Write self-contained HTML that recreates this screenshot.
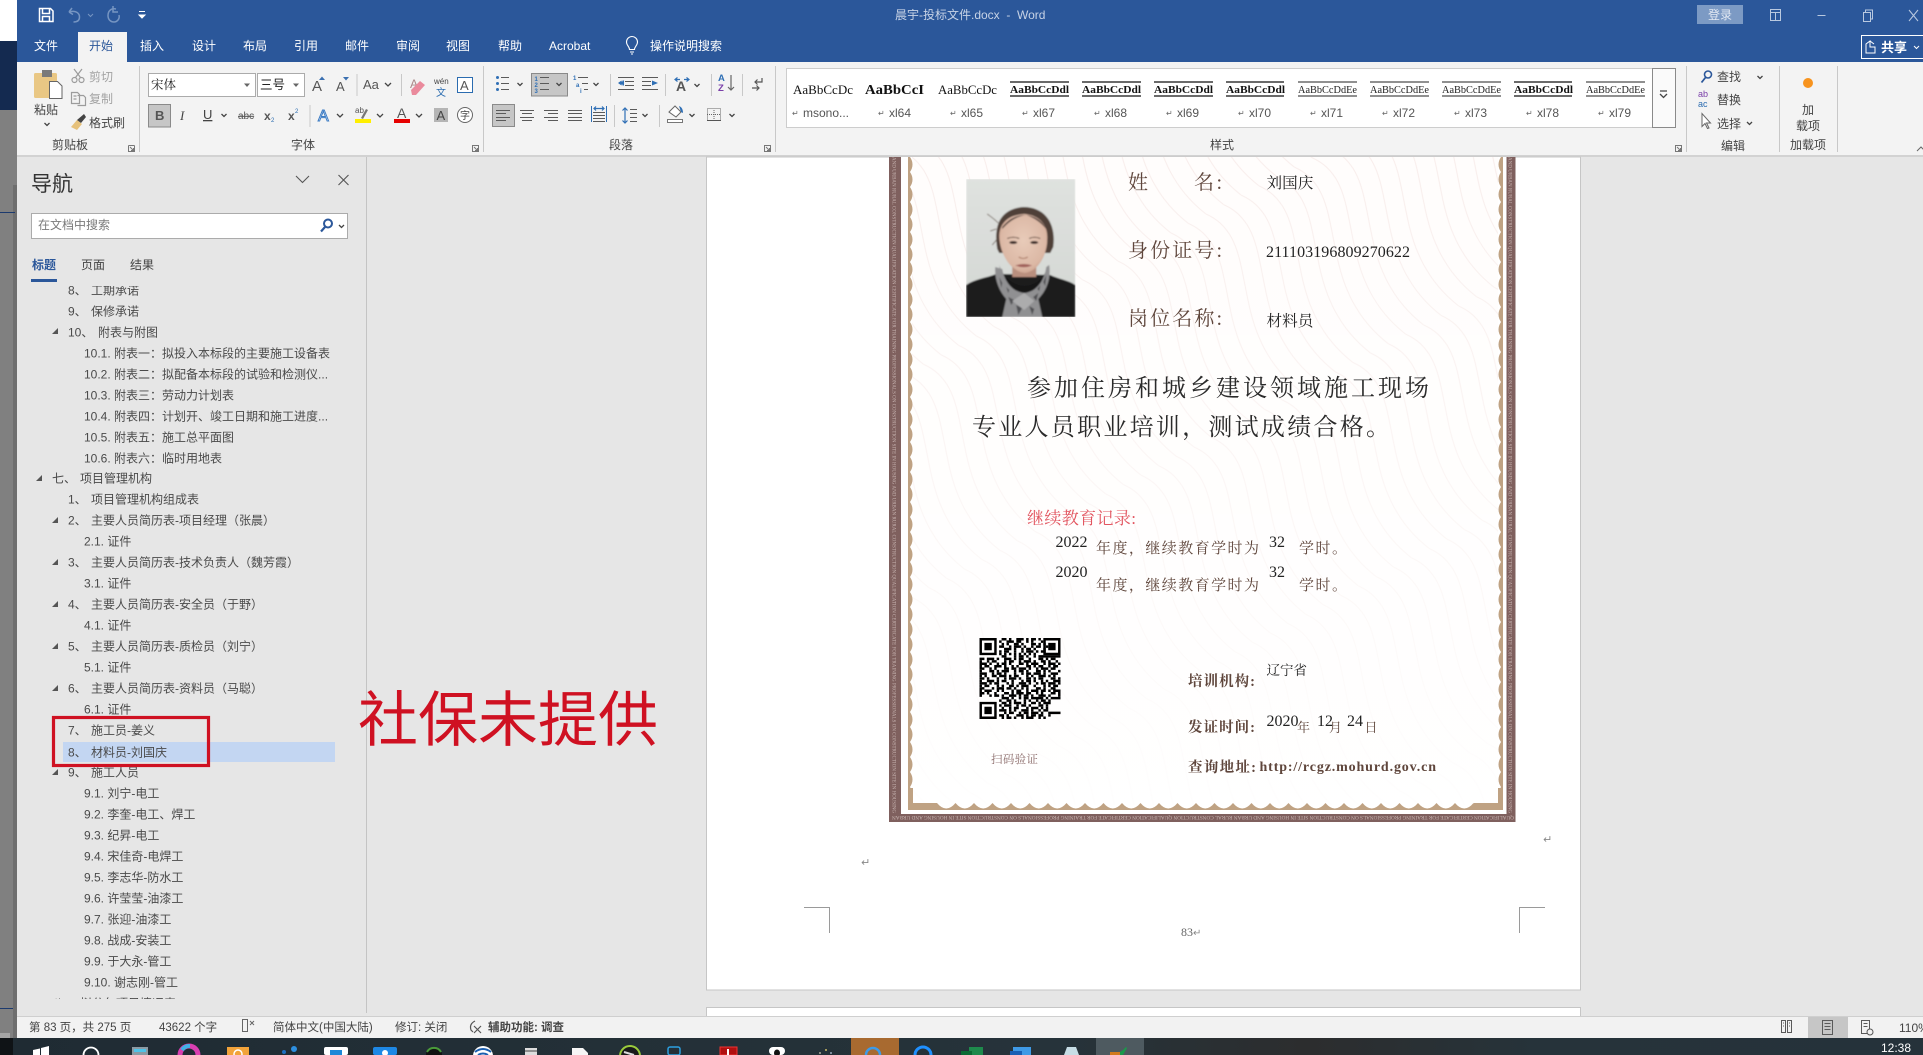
<!DOCTYPE html>
<html lang="zh-CN">
<head>
<meta charset="utf-8">
<title>晨宇-投标文件.docx - Word</title>
<style>
html,body{margin:0;padding:0;width:1923px;height:1055px;overflow:hidden;background:#e6e6e6}
svg{display:block}
text{font-family:"Liberation Sans","Noto Sans CJK SC",sans-serif;font-size:12px;fill:#444;white-space:pre}
.t text{fill:#fff}
.n text{fill:#4a4a4a}
.g text{fill:#444}
.s text{fill:#444;font-size:11.5px}
.serif,.serif text{font-family:"Liberation Serif","Noto Serif CJK SC",serif}
.lab text{fill:#5f463c;font-family:"Liberation Serif","Noto Serif CJK SC",serif}
.val text{fill:#222;font-family:"Liberation Serif","Noto Serif CJK SC",serif}
.ln{stroke:#5a5a5a;stroke-width:1;fill:none}
.bl{stroke:#2f6fb5;stroke-width:1.2;fill:none}
.ch{stroke:#444;stroke-width:1.3;fill:none}
.sep{stroke:#c8c8c8;stroke-width:1}
.micro{font-size:5.6px;fill:#c9b6b3;font-family:"Liberation Serif",serif}
</style>
</head>
<body>
<svg xmlns="http://www.w3.org/2000/svg" width="1923" height="1055" viewBox="0 0 1923 1055">
<defs>
<pattern id="wave" patternUnits="userSpaceOnUse" x="900" y="150" width="200" height="120" patternTransform="rotate(62 900 150)">
<g fill="none" stroke="#f8edeb" stroke-width="1">
<path d="M0 0C50-40 110 40 200 0"/><path d="M0 20C50-20 110 60 200 20"/><path d="M0 40C50 0 110 80 200 40"/><path d="M0 60C50 20 110 100 200 60"/><path d="M0 80C50 40 110 120 200 80"/><path d="M0 100C50 60 110 140 200 100"/><path d="M0 120C50 80 110 160 200 120"/>
</g>
</pattern>
<pattern id="scL" patternUnits="userSpaceOnUse" x="908" y="157" width="6" height="15"><path d="M0 0h2q5 7.500 0 15H0z" fill="#bfa283"/></pattern>
<pattern id="scR" patternUnits="userSpaceOnUse" x="1497" y="157" width="6" height="15"><path d="M6 0H4q-5 7.500 0 15h2z" fill="#bfa283"/></pattern>
<pattern id="scB" patternUnits="userSpaceOnUse" x="937" y="803" width="18.500" height="7"><path d="M0 0Q9.250 11 18.500 0V7H0z" fill="#bfa283"/></pattern>
<linearGradient id="fade" x1="0" y1="0" x2="0" y2="1"><stop offset="0" stop-color="#fff" stop-opacity="0"/><stop offset=".55" stop-color="#fff" stop-opacity=".5"/><stop offset="1" stop-color="#fff" stop-opacity=".92"/></linearGradient>
<linearGradient id="tb" x1="0" y1="0" x2="1" y2="0"><stop offset="0" stop-color="#1f2b33"/><stop offset=".55" stop-color="#26333a"/><stop offset=".68" stop-color="#2c2d2e"/><stop offset=".8" stop-color="#26333a"/><stop offset="1" stop-color="#25323a"/></linearGradient>
<linearGradient id="pbg" x1="0" y1="0" x2="0" y2="1"><stop offset="0" stop-color="#dfe2df"/><stop offset="1" stop-color="#d3d6d3"/></linearGradient>
<radialGradient id="skin" cx=".5" cy=".45" r=".62"><stop offset="0" stop-color="#e8cbb9"/><stop offset=".75" stop-color="#dcb8a5"/><stop offset="1" stop-color="#c49884"/></radialGradient>
<clipPath id="navclip"><rect x="17" y="286" width="350" height="713"/></clipPath>
<filter id="soft"><feGaussianBlur stdDeviation=".7"/></filter>
</defs>

<!-- base -->
<rect width="1923" height="1055" fill="#e6e6e6"/>

<!-- background strip at left -->
<rect x="0" y="0" width="17" height="41" fill="#fff"/>
<rect x="0" y="41" width="17" height="69" fill="#142a50"/>
<rect x="0" y="110" width="17" height="928" fill="#808080"/>
<rect x="13" y="185" width="4" height="853" fill="#6e6e6e"/>
<rect x="0" y="212" width="15" height="1" fill="#1c3a6e"/>
<rect x="0" y="1008" width="13" height="1" fill="#1c3a6e"/>
<rect x="0" y="1033" width="10" height="5" fill="#a5a5a5"/>

<!-- title bar & tabs -->
<rect x="17" y="0" width="1906" height="62" fill="#2b579a"/>
<rect x="78" y="32" width="49" height="30" fill="#f3f3f3"/>
<!-- QAT -->
<g fill="none" stroke="#fff" stroke-width="1.5">
<path d="M39.500 8.500h11l2.500 2.500v10.500h-13.500z"/><path d="M42.500 9v4.500h7V9"/><path d="M42.500 21.500v-5h7v5"/>
</g>
<g fill="none" stroke="#7695c2" stroke-width="1.500">
<path d="M69 12l3-4M69 12l4 2.500M69.500 12c6-2 10 1 10 5s-3 5-6 5"/>
<path d="M88 14l2.500 2.500 2.500-2.500" stroke-width="1"/>
<path d="M116 9c-5-1-8 2-8 6.500s3 6.500 6 6.500 6-3 5-7M113 6v6h5" />
</g>
<path d="M139 11.500h6M139 15l3 3 3-3z" fill="#fff" stroke="#fff"/>
<g class="t">
<text x="34" y="50">文件</text>
<text x="140" y="50">插入</text>
<text x="192" y="50">设计</text>
<text x="243" y="50">布局</text>
<text x="294" y="50">引用</text>
<text x="345" y="50">邮件</text>
<text x="396" y="50">审阅</text>
<text x="446" y="50">视图</text>
<text x="498" y="50">帮助</text>
<text x="549" y="50">Acrobat</text>
<text x="650" y="50">操作说明搜索</text>
</g>
<text x="89" y="50" style="fill:#2b579a">开始</text>
<g fill="none" stroke="#fff" stroke-width="1.100">
<path d="M629.500 49.500c0-3-3-4-3-7.500a5.500 5.500 0 0 1 11 0c0 3.500-3 4.500-3 7.500z"/><path d="M630 52h4M631 54h2"/>
</g>
<text x="895" y="19" style="fill:#c7d3e6">晨宇-投标文件.docx  -  Word</text>
<rect x="1697" y="5" width="46" height="19" fill="#7c9ac4"/>
<text x="1708" y="19" style="fill:#e3e9f3">登录</text>
<g fill="none" stroke="#b9c9e0" stroke-width="1">
<path d="M1770.500 9.500h10v11h-10zM1770.500 12.500h10M1775.500 12.500v8"/>
<path d="M1817.500 15.500h8"/>
<path d="M1863.500 12.500h7v9h-7zM1865.500 12.500v-2.500h7v9h-2"/>
<path d="M1909 10l9 11M1918 10l-9 11"/>
</g>
<rect x="1861.500" y="35.500" width="62" height="23" fill="none" stroke="#fff"/>
<path d="M1866 44l4-3v6h5v6h-9zM1870 41l4 3" fill="none" stroke="#fff" stroke-width="1"/>
<text x="1881" y="52" style="fill:#fff;font-size:13px;font-weight:bold">共享</text>
<path d="M1914 46l2.500 2.500 2.500-2.500" fill="none" stroke="#fff"/>

<!-- ribbon -->
<rect x="17" y="62" width="1906" height="93" fill="#f3f3f3"/>
<rect x="17" y="155" width="1906" height="2" fill="#d2d2d2"/>

<!-- clipboard group -->
<rect x="34" y="73" width="23" height="25" rx="1.500" fill="#e9c784"/>
<rect x="42" y="70" width="10" height="7" fill="#7a7a7a"/>
<path d="M49.500 81.500h8l4.500 4.500v12.500H49.500z" fill="#fff" stroke="#666"/>
<text x="34" y="114">粘贴</text>
<path class="ch" d="M44.500 123l2.500 2.500 2.500-2.500"/>
<g fill="none" stroke="#9c9c9c" stroke-width="1.200">
<circle cx="74.500" cy="80" r="2.500"/><circle cx="81.500" cy="80" r="2.500"/><path d="M75.500 77.500L82 69M80.500 77.500L74 69"/>
<path d="M71.500 92.500h6l2 2v9h-8zM77.500 95.500h6l2 2v8h-8"/><path d="M73.500 96h3M73.500 99h3"/>
</g>
<g fill="#aaa"><text x="89" y="81" style="fill:#a3a3a3">剪切</text><text x="89" y="103" style="fill:#a3a3a3">复制</text></g>
<path d="M71 127l6-7 5 4-5 6z" fill="#e6c17a"/>
<path d="M77 120l7-6 2 3-5 6z" fill="#444"/>
<text x="89" y="127">格式刷</text>
<text x="52" y="149">剪贴板</text>
<g fill="none" stroke="#777"><path d="M128.500 145.500h6M128.500 145.500v6h6v-6M130 147l3.500 3.500M133.500 148v2.500H131"/></g>
<path class="sep" d="M139.500 66v86"/>

<!-- font group -->
<rect x="148.500" y="73.500" width="107" height="23" fill="#fff" stroke="#ababab"/>
<text x="151" y="89" style="font-size:12.500px;font-family:'Liberation Serif','Noto Serif CJK SC',serif;fill:#222">宋体</text>
<path d="M244 83.500h6l-3 3.500z" fill="#666"/>
<rect x="257.500" y="73.500" width="47" height="23" fill="#fff" stroke="#ababab"/>
<text x="260" y="89" style="font-size:12.500px;fill:#222">三号</text>
<path d="M293 83.500h6l-3 3.500z" fill="#666"/>
<text x="312" y="91" style="font-size:15px;fill:#555">A</text><path d="M319 80l3-3.500 3 3.500z" fill="#3a6fb0"/>
<text x="336" y="91" style="font-size:13px;fill:#555">A</text><path d="M343 77l3 3.500 3-3.500z" fill="#3a6fb0"/>
<path class="sep" d="M357 74v22"/>
<text x="363" y="89" style="font-size:13px;fill:#555">Aa</text>
<path class="ch" d="M385 83l3 3 3-3"/>
<path class="sep" d="M401.500 74v22"/>
<text x="410" y="88" style="font-size:12px;fill:#a88">A</text>
<path d="M412 95l-1-5 9-9 5 4-9 10z" fill="#ea8a9c"/>
<text x="434" y="84" style="font-size:8px;fill:#444">wén</text>
<text x="436" y="96" style="font-size:10px;fill:#2b6cb0">文</text>
<rect x="457.500" y="77.500" width="15" height="15" fill="#fff" stroke="#2b6cb0"/>
<text x="460" y="90" style="font-size:13px;fill:#555">A</text>

<rect x="148.500" y="104.500" width="22" height="22.500" fill="#c6c6c6" stroke="#8a8a8a"/>
<text x="155" y="120" style="font-weight:bold;font-size:13px;fill:#555">B</text>
<text x="180" y="120" style="font-style:italic;font-size:13px;font-family:'Liberation Serif',serif;fill:#444">I</text>
<text x="203" y="119" style="font-size:13px;fill:#444;text-decoration:underline">U</text>
<path class="ch" d="M221.500 114l2.500 2.500 2.500-2.500"/>
<text x="238" y="119" style="font-size:10px;fill:#555;text-decoration:line-through">abc</text>
<text x="264" y="120" style="font-weight:bold;font-size:12px;fill:#555">x</text><text x="271" y="122" style="font-size:6px;fill:#2b6cb0">2</text>
<text x="288" y="120" style="font-weight:bold;font-size:12px;fill:#555">x</text><text x="295" y="113" style="font-size:6px;fill:#2b6cb0">2</text>
<path class="sep" d="M310 105v22"/>
<text x="318" y="121" style="font-size:16px;fill:#fff;stroke:#3d7cc4;stroke-width:1">A</text>
<path class="ch" d="M337 114l3 3 3-3"/>
<text x="355" y="113" style="font-size:8px;fill:#555">ab</text>
<path d="M361 118l5-9 2 1-5 9z" fill="#777"/>
<rect x="355" y="119" width="16" height="4" fill="#ffef00"/>
<path class="ch" d="M377 114l3 3 3-3"/>
<text x="397" y="118" style="font-size:14px;fill:#555">A</text>
<rect x="394" y="119" width="16" height="4" fill="#e60000"/>
<path class="ch" d="M416 114l3 3 3-3"/>
<rect x="434" y="108" width="14" height="14" fill="#b5b5b5"/>
<text x="436.500" y="120" style="font-size:13px;fill:#444">A</text>
<circle cx="465" cy="115" r="7.500" fill="#fff" stroke="#666"/>
<text x="460" y="119" style="font-size:10px;fill:#444">字</text>
<text x="291" y="149">字体</text>
<g fill="none" stroke="#777"><path d="M472.500 145.500h6v6h-6zM474 147l3.500 3.500M477.500 148v2.500H475"/></g>
<path class="sep" d="M483.500 66v86"/>

<!-- paragraph group -->
<g fill="#2f6fb5"><circle cx="497.500" cy="77.500" r="1.500"/><circle cx="497.500" cy="83.500" r="1.500"/><circle cx="497.500" cy="89.500" r="1.500"/></g>
<path class="ln" d="M501 77.500h8M501 83.500h8M501 89.500h8"/>
<path class="ch" d="M517.500 83l2.500 2.500 2.500-2.500"/>
<rect x="531.500" y="73.500" width="36" height="22.500" fill="#c6c6c6" stroke="#8a8a8a"/>
<text x="534.500" y="81" style="font-size:6px;font-weight:bold;fill:#2f6fb5">1</text>
<text x="534.500" y="87" style="font-size:6px;font-weight:bold;fill:#2f6fb5">2</text>
<text x="534.500" y="93" style="font-size:6px;font-weight:bold;fill:#2f6fb5">3</text>
<path class="ln" d="M540 77.500h9M540 83.500h9M540 89.500h9"/>
<path class="ch" d="M556.500 83l2.500 2.500 2.500-2.500"/>
<text x="573" y="80" style="font-size:6px;font-weight:bold;fill:#2f6fb5">1</text>
<text x="576" y="87" style="font-size:6px;font-weight:bold;fill:#2f6fb5">a</text>
<text x="580" y="93" style="font-size:6px;font-weight:bold;fill:#2f6fb5">i</text>
<path class="ln" d="M578 77.500h10M582 83.500h6M584 89.500h4"/>
<path class="ch" d="M593.500 83l2.500 2.500 2.500-2.500"/>
<path class="sep" d="M610.500 74v22"/>
<path class="ln" d="M618 77.500h16M625 81.500h9M625 85.500h9M618 89.500h16"/><path d="M624 80.500v5h-1.500v-1h-1v1l-3.500-2.500 3.500-2.500v1h1v-1z" fill="#2f6fb5"/>
<path class="ln" d="M642 77.500h16M642 81.500h9M642 85.500h9M642 89.500h16"/><path d="M652 80.500l6 2.500-6 2.500z" fill="#2f6fb5"/>
<path class="sep" d="M665.500 74v22"/>
<text x="676" y="91" style="font-size:14px;font-weight:bold;fill:#555">A</text>
<path class="bl" d="M680 79.500h-4M677.500 77.500l-2.500 2 2.500 2M684 79.500h4M686.500 77.500l2.500 2-2.500 2"/>
<path class="ch" d="M694.500 84l2.500 2.500 2.500-2.500"/>
<path class="sep" d="M711.500 74v22"/>
<text x="718" y="81" style="font-size:9.500px;font-weight:bold;fill:#2f6fb5">A</text><text x="718" y="91" style="font-size:9.500px;font-weight:bold;fill:#7a3fa8">Z</text>
<path d="M731 75v15M728 87l3 3 3-3" fill="none" stroke="#666" stroke-width="1.200"/>
<path class="sep" d="M742.500 74v22"/>
<path d="M762 78v4h-7M757.500 79.500l-2.500 2.500 2.500 2.500M752 88h7M756.500 85.500l2.500 2.500-2.500 2.500" fill="none" stroke="#555" stroke-width="1.200"/>

<rect x="492.500" y="104.500" width="22" height="22" fill="#c6c6c6" stroke="#8a8a8a"/>
<path class="ln" d="M496 110.500h14M496 113.500h10M496 117.500h14M496 120.500h10"/>
<path class="ln" d="M520 110.500h14M522 113.500h10M520 117.500h14M522 120.500h10"/>
<path class="ln" d="M544 110.500h14M548 113.500h10M544 117.500h14M548 120.500h10"/>
<path class="ln" d="M568 110.500h14M568 113.500h14M568 117.500h14M568 120.500h14"/>
<path d="M591.500 106v16M606.500 106v16" stroke="#2f6fb5" fill="none"/>
<path class="ln" d="M593 112.500h12M593 115.500h12M593 118.500h12M593 121.500h12"/>
<path class="bl" d="M594 108.500h10M596 106.500l-2 2 2 2M602 106.500l2 2-2 2"/>
<path class="sep" d="M614.500 105v22"/>
<path class="ln" d="M630 109.500h7M630 113.500h7M630 117.500h7M630 121.500h7"/>
<path class="bl" d="M625 108v15M622.500 110.500l2.500-2.500 2.500 2.500M622.500 120.500l2.500 2.500 2.500-2.500"/>
<path class="ch" d="M642.500 114l2.500 2.500 2.500-2.500"/>
<path class="sep" d="M659.500 105v22"/>
<path d="M669 112l6-6 6 6-5 5z" fill="#fff" stroke="#666"/><path d="M679 106c3 1 4 4 4 7l-2-1z" fill="#2f6fb5"/>
<rect x="667.500" y="119.500" width="15" height="3" fill="#fff" stroke="#777"/>
<path class="ch" d="M689.500 114l2.500 2.500 2.500-2.500"/>
<path d="M707.500 108.500h13v12h-13zM714 108v13M707 114.500h14" fill="none" stroke="#666" stroke-dasharray="1 1"/>
<path d="M707 120.500h14" stroke="#555"/>
<path class="ch" d="M729.500 114l2.500 2.500 2.500-2.500"/>
<text x="609" y="149">段落</text>
<g fill="none" stroke="#777"><path d="M764.500 145.500h6v6h-6zM766 147l3.500 3.500M769.500 148v2.500H767"/></g>
<path class="sep" d="M775.500 66v86"/>

<!-- styles gallery -->
<rect x="786.500" y="68.500" width="866" height="59" fill="#fff" stroke="#cdcdcd"/>
<rect x="1652.500" y="68.500" width="23" height="59" fill="#fafafa" stroke="#8a8a8a"/>
<path class="ch" d="M1660 94l3.500 3.500 3.500-3.500M1660 91h7"/>
<g class="serif" style="fill:#111">
<text x="793" y="94" textLength="60" lengthAdjust="spacingAndGlyphs" style="font-size:13px;fill:#111;font-family:'Liberation Serif',serif">AaBbCcDc</text>
<text x="865" y="94" textLength="59" lengthAdjust="spacingAndGlyphs" style="font-size:14px;font-weight:bold;fill:#111;font-family:'Liberation Serif',serif">AaBbCcI</text>
<text x="938" y="94" textLength="59" lengthAdjust="spacingAndGlyphs" style="font-size:13px;fill:#111;font-family:'Liberation Serif',serif">AaBbCcDc</text>
<text x="1010" y="93" textLength="59" lengthAdjust="spacingAndGlyphs" style="font-size:11px;font-weight:bold;fill:#111;font-family:'Liberation Serif',serif">AaBbCcDdl</text>
<text x="1082" y="93" textLength="59" lengthAdjust="spacingAndGlyphs" style="font-size:11px;font-weight:bold;fill:#111;font-family:'Liberation Serif',serif">AaBbCcDdl</text>
<text x="1154" y="93" textLength="59" lengthAdjust="spacingAndGlyphs" style="font-size:11px;font-weight:bold;fill:#111;font-family:'Liberation Serif',serif">AaBbCcDdl</text>
<text x="1226" y="93" textLength="59" lengthAdjust="spacingAndGlyphs" style="font-size:11px;font-weight:bold;fill:#111;font-family:'Liberation Serif',serif">AaBbCcDdl</text>
<text x="1298" y="93" textLength="59" lengthAdjust="spacingAndGlyphs" style="font-size:10px;fill:#222;font-family:'Liberation Serif',serif">AaBbCcDdEe</text>
<text x="1370" y="93" textLength="59" lengthAdjust="spacingAndGlyphs" style="font-size:10px;fill:#222;font-family:'Liberation Serif',serif">AaBbCcDdEe</text>
<text x="1442" y="93" textLength="59" lengthAdjust="spacingAndGlyphs" style="font-size:10px;fill:#222;font-family:'Liberation Serif',serif">AaBbCcDdEe</text>
<text x="1514" y="93" textLength="59" lengthAdjust="spacingAndGlyphs" style="font-size:11px;font-weight:bold;fill:#111;font-family:'Liberation Serif',serif">AaBbCcDdl</text>
<text x="1586" y="93" textLength="59" lengthAdjust="spacingAndGlyphs" style="font-size:10px;fill:#222;font-family:'Liberation Serif',serif">AaBbCcDdEe</text>
</g>
<g stroke="#111" stroke-width="1.300">
<path d="M1010 82h59M1010 96h59M1082 82h59M1082 96h59M1154 82h59M1154 96h59M1226 82h58M1226 96h58M1514 82h58M1514 96h58"/>
</g>
<g stroke="#222" stroke-width=".9">
<path d="M1298 82h59M1298 96h59M1370 82h59M1370 96h59M1442 82h59M1442 96h59M1586 82h59M1586 96h59"/>
</g>
<g style="fill:#555">
<text x="803" y="117" style="fill:#555">msono...</text>
<text x="889" y="117" style="fill:#555">xl64</text>
<text x="961" y="117" style="fill:#555">xl65</text>
<text x="1033" y="117" style="fill:#555">xl67</text>
<text x="1105" y="117" style="fill:#555">xl68</text>
<text x="1177" y="117" style="fill:#555">xl69</text>
<text x="1249" y="117" style="fill:#555">xl70</text>
<text x="1321" y="117" style="fill:#555">xl71</text>
<text x="1393" y="117" style="fill:#555">xl72</text>
<text x="1465" y="117" style="fill:#555">xl73</text>
<text x="1537" y="117" style="fill:#555">xl78</text>
<text x="1609" y="117" style="fill:#555">xl79</text>
</g>
<g>
<text x="792" y="116" style="font-size:8px;fill:#666;font-family:'DejaVu Sans',sans-serif">↵</text>
<text x="878" y="116" style="font-size:8px;fill:#666;font-family:'DejaVu Sans',sans-serif">↵</text>
<text x="950" y="116" style="font-size:8px;fill:#666;font-family:'DejaVu Sans',sans-serif">↵</text>
<text x="1022" y="116" style="font-size:8px;fill:#666;font-family:'DejaVu Sans',sans-serif">↵</text>
<text x="1094" y="116" style="font-size:8px;fill:#666;font-family:'DejaVu Sans',sans-serif">↵</text>
<text x="1166" y="116" style="font-size:8px;fill:#666;font-family:'DejaVu Sans',sans-serif">↵</text>
<text x="1238" y="116" style="font-size:8px;fill:#666;font-family:'DejaVu Sans',sans-serif">↵</text>
<text x="1310" y="116" style="font-size:8px;fill:#666;font-family:'DejaVu Sans',sans-serif">↵</text>
<text x="1382" y="116" style="font-size:8px;fill:#666;font-family:'DejaVu Sans',sans-serif">↵</text>
<text x="1454" y="116" style="font-size:8px;fill:#666;font-family:'DejaVu Sans',sans-serif">↵</text>
<text x="1526" y="116" style="font-size:8px;fill:#666;font-family:'DejaVu Sans',sans-serif">↵</text>
<text x="1598" y="116" style="font-size:8px;fill:#666;font-family:'DejaVu Sans',sans-serif">↵</text>
</g>
<text x="1210" y="149">样式</text>
<g fill="none" stroke="#777"><path d="M1675.500 145.500h6v6h-6zM1677 147l3.500 3.500M1680.500 148v2.500H1678"/></g>
<path class="sep" d="M1686.500 66v86M1779.500 66v86M1837.500 66v86"/>

<!-- editing -->
<circle cx="1708" cy="74.500" r="3.500" fill="none" stroke="#2b579a" stroke-width="1.600"/><path d="M1705.500 77.500l-4 5" stroke="#2b579a" stroke-width="1.800"/>
<text x="1717" y="81">查找</text>
<path class="ch" d="M1757.500 76l2.500 2.500 2.500-2.500"/>
<text x="1698" y="97" style="font-size:9px;fill:#7a3fa8">ab</text><text x="1698" y="107" style="font-size:9px;fill:#2b6cb0">ac</text>
<text x="1717" y="104">替换</text>
<path d="M1702 113.500v13l3-3 2.500 5 1.500-.5-2.500-5h4z" fill="#fff" stroke="#666"/>
<text x="1717" y="128">选择</text>
<path class="ch" d="M1747 122l2.500 2.500 2.500-2.500"/>
<text x="1721" y="150">编辑</text>
<!-- addins -->
<circle cx="1808" cy="83" r="5" fill="#f7931e"/>
<text x="1802" y="114">加</text>
<text x="1796" y="130">载项</text>
<text x="1790" y="149">加载项</text>
<path d="M1917 151l4-4 4 4" fill="none" stroke="#666"/>

<!-- navigation pane -->
<text x="31" y="191" style="font-size:21px;fill:#333">导航</text>
<path d="M296 176l6.500 6.500 6.500-6.500" fill="none" stroke="#555" stroke-width="1.100"/>
<path d="M338.500 175l10 10M348.500 175l-10 10" fill="none" stroke="#555" stroke-width="1.100"/>
<rect x="31.500" y="213.500" width="316" height="25" fill="#fff" stroke="#ababab"/>
<text x="38" y="229" style="fill:#7a7a7a">在文档中搜索</text>
<circle cx="328" cy="223.500" r="4" fill="none" stroke="#2b579a" stroke-width="2"/><path d="M325 227l-4 4.500" stroke="#2b579a" stroke-width="2.200"/>
<path class="ch" d="M339 225l2.500 2.500 2.500-2.500"/>
<text x="32" y="269" style="fill:#2b579a;font-weight:bold">标题</text>
<text x="81" y="269">页面</text>
<text x="130" y="269">结果</text>
<rect x="31" y="279" width="26" height="3" fill="#2b579a"/>

<g clip-path="url(#navclip)">
<rect x="63" y="742" width="272" height="20" fill="#c3d6f2"/>
<g class="n" transform="translate(0 .3)">
<text x="68" y="294">8、</text><text x="91" y="294">工期承诺</text>
<text x="68" y="315">9、</text><text x="91" y="315">保修承诺</text>
<text x="68" y="336">10、</text><text x="98" y="336">附表与附图</text>
<text x="84" y="357">10.1. 附表一&#xFF1A;拟投入本标段的主要施工设备表</text>
<text x="84" y="378">10.2. 附表二&#xFF1A;拟配备本标段的试验和检测仪...</text>
<text x="84" y="399">10.3. 附表三&#xFF1A;劳动力计划表</text>
<text x="84" y="420">10.4. 附表四&#xFF1A;计划开、竣工日期和施工进度...</text>
<text x="84" y="441">10.5. 附表五&#xFF1A;施工总平面图</text>
<text x="84" y="462">10.6. 附表六&#xFF1A;临时用地表</text>
<text x="52" y="482">七、</text><text x="80" y="482">项目管理机构</text>
<text x="68" y="503">1、</text><text x="91" y="503">项目管理机构组成表</text>
<text x="68" y="524">2、</text><text x="91" y="524">主要人员简历表-项目经理&#xFF08;张晨&#xFF09;</text>
<text x="84" y="545">2.1. 证件</text>
<text x="68" y="566">3、</text><text x="91" y="566">主要人员简历表-技术负责人&#xFF08;魏芳霞&#xFF09;</text>
<text x="84" y="587">3.1. 证件</text>
<text x="68" y="608">4、</text><text x="91" y="608">主要人员简历表-安全员&#xFF08;于野&#xFF09;</text>
<text x="84" y="629">4.1. 证件</text>
<text x="68" y="650">5、</text><text x="91" y="650">主要人员简历表-质检员&#xFF08;刘宁&#xFF09;</text>
<text x="84" y="671">5.1. 证件</text>
<text x="68" y="692">6、</text><text x="91" y="692">主要人员简历表-资料员&#xFF08;马聪&#xFF09;</text>
<text x="84" y="713">6.1. 证件</text>
<text x="68" y="734">7、</text><text x="91" y="734">施工员-姜义</text>
<text x="68" y="756">8、</text><text x="91" y="756">材料员-刘国庆</text>
<text x="68" y="776">9、</text><text x="91" y="776">施工人员</text>
<text x="84" y="797">9.1. 刘宁-电工</text>
<text x="84" y="818">9.2. 李奎-电工、焊工</text>
<text x="84" y="839">9.3. 纪昇-电工</text>
<text x="84" y="860">9.4. 宋佳奇-电焊工</text>
<text x="84" y="881">9.5. 李志华-防水工</text>
<text x="84" y="902">9.6. 许莹莹-油漆工</text>
<text x="84" y="923">9.7. 张迎-油漆工</text>
<text x="84" y="944">9.8. 战成-安装工</text>
<text x="84" y="965">9.9. 于大永-管工</text>
<text x="84" y="986">9.10. 谢志刚-管工</text>
<text x="52" y="1007">八、</text><text x="80" y="1007">拟分包项目情况表</text>
</g>
<g fill="#555">
<path d="M58 328v6h-6z"/>
<path d="M42 475v6h-6z"/>
<path d="M58 517v6h-6z"/>
<path d="M58 559v6h-6z"/>
<path d="M58 601v6h-6z"/>
<path d="M58 643v6h-6z"/>
<path d="M58 685v6h-6z"/>
<path d="M58 769v6h-6z"/>
</g>
</g>
<rect x="366" y="157" width="1" height="856" fill="#c4c4c4"/>

<!-- page -->
<rect x="706.500" y="157" width="874" height="833" fill="#fff" stroke="#c6c6c6"/>
<rect x="706.500" y="1007.500" width="874" height="12" fill="#fff" stroke="#c6c6c6"/>

<!-- certificate -->
<rect x="889" y="157" width="626.500" height="665" fill="#7f605e"/>
<rect x="901" y="157" width="605.500" height="657" fill="#fff"/>
<rect x="912" y="157" width="586" height="648" fill="#fffdfc"/>
<rect x="912" y="157" width="586" height="648" fill="url(#wave)"/>
<rect x="912" y="157" width="586" height="648" fill="url(#fade)"/>
<rect x="908" y="157" width="6" height="645" fill="url(#scL)"/>
<rect x="1497" y="157" width="6" height="645" fill="url(#scR)"/>
<rect x="908" y="788" width="5" height="22" fill="#bfa283"/>
<rect x="1498" y="788" width="5" height="22" fill="#bfa283"/>
<rect x="908" y="803" width="29" height="7" fill="#bfa283"/>
<rect x="1474" y="803" width="29" height="7" fill="#bfa283"/>
<rect x="937" y="803" width="537" height="7" fill="url(#scB)"/>
<text class="micro" transform="translate(892.500,157) rotate(90)" textLength="656" lengthAdjust="spacingAndGlyphs">AND URBAN RURAL CONSTRUCTION QUALIFICATION CERTIFICATE FOR TRAINING PROFESSIONALS ON CONSTRUCTION SITE IN HOUSING AND URBAN RURAL CONSTRUCTION QUALIFICATION CERTIFICATE FOR TRAINING PROFESSIONALS ON CONSTRUCTION SITE IN HOUSING</text>
<text class="micro" transform="translate(1508.500,157) rotate(90)" textLength="656" lengthAdjust="spacingAndGlyphs">AND URBAN RURAL CONSTRUCTION QUALIFICATION CERTIFICATE FOR TRAINING PROFESSIONALS ON CONSTRUCTION SITE IN HOUSING AND URBAN RURAL CONSTRUCTION QUALIFICATION CERTIFICATE FOR TRAINING PROFESSIONALS ON CONSTRUCTION SITE IN HOUSING</text>
<text class="micro" transform="translate(1514,816) rotate(180)" textLength="622" lengthAdjust="spacingAndGlyphs">QUALIFICATION CERTIFICATE FOR TRAINING PROFESSIONALS ON CONSTRUCTION SITE IN HOUSING AND URBAN RURAL CONSTRUCTION QUALIFICATION CERTIFICATE FOR TRAINING PROFESSIONALS ON CONSTRUCTION SITE IN HOUSING AND URBAN</text>

<!-- photo -->
<svg x="966" y="179" width="109.500" height="138" viewBox="0 0 109 138">
<g filter="url(#soft)">
<rect width="109" height="138" fill="url(#pbg)"/>
<path d="M31 70C27 46 34 30 57 28C80 28 90 46 87 68L84 74L33 74Z" fill="#4f4039"/>
<path d="M32 44C28 40 25 38 21 35M30 50L24 52M31 60L26 66" stroke="#6a5a50" stroke-width=".8" fill="none"/>
<path d="M0 138V106C8 100 20 99 30 95L84 96C92 100 102 101 109 106V138Z" fill="#1b1b1d"/>
<path d="M33 86C36 98 48 107 58 107C70 107 79 98 82 86L76 118L40 118Z" fill="#131315"/>
<path d="M29 88C28 100 33 112 40 120L36 138L76 138L72 120C80 112 85 100 83 86L80 88C78 102 70 113 58 114C46 113 38 102 36 90Z" fill="#909092"/>
<path d="M33 98l3 6-1 5zM80 96l-3 7 2 4zM42 118l6 3-3 5zM72 114l-5 4 3 4zM50 126l6 3-4 7zM63 127l5 3-2 6zM40 108l3 3-1 3zM74 106l-3 4 2 2z" fill="#4f4f52"/>
<path d="M46 122L58 114L68 122L58 131Z" fill="#acacad"/>
<rect x="46" y="82" width="24" height="16" fill="#b98f7e"/>
<path d="M33 58C33 44 42 36 58 35C72 36 82 45 81 60C81 76 72 92 59 94C45 93 34 76 33 58Z" fill="url(#skin)"/>
<path d="M36 48C44 38 52 36 60 36C52 37 44 41 36 50ZM60 36C68 37 76 41 80 50C74 43 68 39 60 36Z" fill="#5a4a42"/>
<path d="M41 59.500q6-2.500 12 0M63 59.500q5-2.500 11 0" stroke="#6b5348" stroke-width="1.100" fill="none"/>
<ellipse cx="47" cy="63.500" rx="4" ry="1.500" fill="#3a2c28"/>
<ellipse cx="68" cy="63.500" rx="4" ry="1.500" fill="#3a2c28"/>
<path d="M52.500 78q4.500 3 9 0" stroke="#ad7e6b" stroke-width="1.100" fill="none"/>
<path d="M49 86.500q8.500-3 17 0q-8.500 3.500-17 0z" fill="#a0605a"/>
</g>
</svg>

<g class="lab">
<text x="1128" y="189" style="font-size:20px">姓</text>
<text x="1194" y="189" style="font-size:20px" textLength="28">名:</text>
<text x="1128" y="257" style="font-size:20px" textLength="94">身份证号:</text>
<text x="1128" y="325" style="font-size:20px" textLength="94">岗位名称:</text>
</g>
<g class="val">
<text x="1266.500" y="188" style="font-size:15.600px">刘国庆</text>
<text x="1266" y="257" style="font-size:16px" textLength="144">211103196809270622</text>
<text x="1266.500" y="326" style="font-size:15.600px">材料员</text>
</g>
<g class="serif">
<text x="1027" y="396" textLength="402" style="font-size:24px;fill:#2a2a2a;font-family:'Liberation Serif','Noto Serif CJK SC',serif">参加住房和城乡建设领域施工现场</text>
<text x="972" y="435" textLength="418" style="font-size:24px;fill:#2a2a2a;font-family:'Liberation Serif','Noto Serif CJK SC',serif">专业人员职业培训&#xFF0C;测试成绩合格。</text>
<text x="1027" y="524" textLength="109" style="font-size:17px;fill:#e25560;font-family:'Liberation Serif','Noto Serif CJK SC',serif">继续教育记录:</text>
</g>
<g class="val">
<text x="1055.500" y="547" style="font-size:16px">2022</text>
<text x="1269" y="547" style="font-size:16px">32</text>
<text x="1055.500" y="577" style="font-size:16px">2020</text>
<text x="1269" y="577" style="font-size:16px">32</text>
</g>
<g class="lab">
<text x="1096" y="553" style="font-size:15px" textLength="163">年度&#xFF0C;继续教育学时为</text>
<text x="1299" y="553" style="font-size:15px" textLength="48">学时。</text>
<text x="1096" y="590" style="font-size:15px" textLength="163">年度&#xFF0C;继续教育学时为</text>
<text x="1299" y="590" style="font-size:15px" textLength="48">学时。</text>
</g>

<!-- QR code -->
<svg x="979" y="638" width="82" height="81" viewBox="0 0 33 33">
<g fill="none" stroke="#000" stroke-width="1.020">
<path d="M0 .5h33" stroke-dasharray="0 9 2 1 1 2 3 1 1 1 2 1 1 1 0 2 2 1"/>
<path d="M0 1.500h33" stroke-dasharray="0 8 1 2 3 1 2 2 1 1 1 3 1 1"/>
<path d="M0 2.500h33" stroke-dasharray="0 9 1 1 1 2 2 1 1 3 2 1 1 1 1 1"/>
<path d="M0 3.500h33" stroke-dasharray="0 8 2 2 1 1 3 1 1 2 1 1 2 2 1 1"/>
<path d="M0 4.500h33" stroke-dasharray="0 10 3 1 1 2 1 1 2 1 1 3 1 1"/>
<path d="M0 5.500h33" stroke-dasharray="0 8 1 1 2 2 1 2 1 1 3 1 1 1 2 1"/>
<path d="M0 6.500h33" stroke-dasharray="0 8 1 1 1 1 1 1 1 1 1 1 1 1 1 1 1 1"/>
<path d="M0 7.500h33" stroke-dasharray="0 9 2 3 1 1 2 1 1 2 1 1 3"/>
<path d="M0 8.500h33" stroke-dasharray="2 1 3 1 1 2 3 1 1 1 2 2 1 3 2 1 1 1 2 3"/>
<path d="M0 9.500h33" stroke-dasharray="1 2 1 1 2 3 1 1 2 2 1 1 3 1 1 2 2 1 1 2"/>
<path d="M0 10.500h33" stroke-dasharray="3 1 1 2 1 1 2 1 1 3 2 1 1 1 3 2 1 1"/>
<path d="M0 11.500h33" stroke-dasharray="1 1 2 2 3 1 1 2 1 1 1 3 2 1 1 1 2 2"/>
<path d="M0 12.500h33" stroke-dasharray="2 2 1 1 1 3 2 1 2 1 3 1 1 2 1 1 3 1"/>
<path d="M0 13.500h33" stroke-dasharray="1 3 2 1 1 1 3 2 1 1 2 1 1 3 2 1 1 1"/>
<path d="M0 14.500h33" stroke-dasharray="3 2 1 1 2 1 1 3 1 2 1 1 2 1 3 1 1 2"/>
<path d="M0 15.500h33" stroke-dasharray="1 1 1 2 2 1 3 1 1 1 2 3 1 1 1 2 3 1"/>
<path d="M0 16.500h33" stroke-dasharray="2 1 1 3 1 2 1 1 3 1 1 2 2 1 1 1 2 3"/>
<path d="M0 17.500h33" stroke-dasharray="1 2 3 1 1 1 2 2 1 3 1 1 2 1 1 2 1 1"/>
<path d="M0 18.500h33" stroke-dasharray="3 1 1 1 2 3 1 1 1 2 3 1 1 2 1 1 2 1"/>
<path d="M0 19.500h33" stroke-dasharray="1 1 2 3 1 1 1 2 2 1 1 1 3 2 1 3 1 1"/>
<path d="M0 20.500h33" stroke-dasharray="2 3 1 1 3 1 2 1 1 2 1 1 1 3 2 1 1 2"/>
<path d="M0 21.500h33" stroke-dasharray="1 1 3 2 1 1 1 3 1 1 2 2 1 1 3 1 2 1"/>
<path d="M0 22.500h33" stroke-dasharray="2 1 1 2 1 3 2 1 1 1 3 1 2 2 1 1 1 3"/>
<path d="M0 23.500h33" stroke-dasharray="1 3 1 1 2 1 1 2 3 1 1 1 2 1 1 2 3 1"/>
<path d="M0 24.500h33" stroke-dasharray="0 9 3 1 1 2 1 1 2 1 5 1 1 1 2"/>
<path d="M0 25.500h33" stroke-dasharray="0 8 1 2 2 1 1 3 1 1 1 2 1 1 2 1 1 1"/>
<path d="M0 26.500h33" stroke-dasharray="0 9 2 1 1 1 3 1 1 2 2 1 1 1 3 1"/>
<path d="M0 27.500h33" stroke-dasharray="0 8 1 1 3 2 1 1 2 1 1 3 2 1 1 1"/>
<path d="M0 28.500h33" stroke-dasharray="0 9 1 2 1 1 2 3 1 1 3 1 1 1 1 1"/>
<path d="M0 29.500h33" stroke-dasharray="0 8 3 1 1 1 1 2 3 1 1 2 1 1 2 1"/>
<path d="M0 30.500h33" stroke-dasharray="0 10 1 1 2 2 1 1 2 1 3 1 1 2 1"/>
<path d="M0 31.500h33" stroke-dasharray="0 8 2 1 1 3 3 1 1 1 2 1 2 2 1 1"/>
<path d="M0 32.500h33" stroke-dasharray="0 9 1 1 2 1 1 2 1 1 3 2 1 1 1 1"/>
</g>
<path d="M0 0h7v7H0zM1 1v5h5V1zM2 2h3v3H2zM26 0h7v7h-7zM27 1v5h5V1zM28 2h3v3h-3zM0 26h7v7H0zM1 27v5h5v-5zM2 28h3v3H2z" fill="#000" fill-rule="evenodd"/>
</svg>

<text x="991" y="763" textLength="47" style="font-size:11.500px;fill:#8a6a68;font-family:'Liberation Serif','Noto Serif CJK SC',serif">扫码验证</text>
<g class="lab">
<text x="1188" y="686" style="font-size:14.500px;font-weight:bold" textLength="67">培训机构:</text>
<text x="1188" y="732" style="font-size:14.500px;font-weight:bold" textLength="67">发证时间:</text>
<text x="1188" y="772" style="font-size:14.500px;font-weight:bold" textLength="68">查询地址:</text>
<text x="1259.500" y="771" style="font-size:14px;font-weight:bold" textLength="176.500">http://rcgz.mohurd.gov.cn</text>
<text x="1297" y="732" style="font-size:13px">年</text>
<text x="1329" y="732" style="font-size:13px">月</text>
<text x="1364.500" y="732" style="font-size:13px">日</text>
</g>
<g class="val">
<text x="1266.500" y="675" style="font-size:13.500px">辽宁省</text>
<text x="1266.500" y="726" style="font-size:16px">2020</text>
<text x="1317" y="726" style="font-size:16px">12</text>
<text x="1347" y="726" style="font-size:16px">24</text>
</g>

<!-- page marks -->
<text x="1543" y="843" style="font-size:11px;fill:#888;font-family:'DejaVu Sans',sans-serif">↵</text>
<text x="861" y="866" style="font-size:11px;fill:#888;font-family:'DejaVu Sans',sans-serif">↵</text>
<path d="M804 907.500h25.500V933M1545 907.500h-25.500V933" fill="none" stroke="#9a9a9a"/>
<text x="1181" y="936" style="font-size:12px;fill:#666;font-family:'Liberation Serif',serif">83</text>
<text x="1193" y="936" style="font-size:10px;fill:#888;font-family:'DejaVu Sans',sans-serif">↵</text>

<!-- red annotations -->
<rect x="53.500" y="717.500" width="155" height="48" fill="none" stroke="#cf1122" stroke-width="3.200"/>
<text x="358" y="741" style="font-size:60px;fill:#cf1122;font-family:'Noto Sans CJK SC',sans-serif">社保未提供</text>

<!-- status bar -->
<rect x="17" y="1017" width="1906" height="21" fill="#f2f2f2"/>
<rect x="17" y="1016" width="1906" height="1" fill="#cfcfcf"/>
<g class="s">
<text x="29" y="1031">第 83 页&#xFF0C;共 275 页</text>
<text x="159" y="1031">43622 个字</text>
<text x="273" y="1031">简体中文(中国大陆)</text>
<text x="395" y="1031">修订: 关闭</text>
<text x="488" y="1031" style="font-weight:bold;font-size:11.500px">辅助功能: 调查</text>
</g>
<path d="M242.500 1019.500h5v12h-5zM247.500 1019.500v12M250 1021l4 4M254 1021l-4 4" fill="none" stroke="#666"/>
<path d="M475 1021q-6 3-4 9l2 2M474 1026l7 7M481 1026l-7 7" fill="none" stroke="#555" stroke-width="1.200"/>
<rect x="1808" y="1017" width="40" height="21" fill="#c6c6c6"/>
<path class="ln" d="M1781.500 1020.500h4v12h-4zM1787.500 1020.500h4v12h-4zM1783 1023h1M1783 1026h1M1789 1023h1M1789 1026h1"/>
<path class="ln" d="M1822.500 1020.500h10v14h-10zM1824.500 1023.500h6M1824.500 1026.500h6M1824.500 1029.500h6"/>
<path class="ln" d="M1861.500 1020.500h8v13h-8zM1863.500 1023.500h4M1863.500 1026.500h4"/>
<circle cx="1870" cy="1032" r="3" fill="#f2f2f2" stroke="#555"/>
<text x="1899" y="1032" style="font-size:12px;fill:#444">110%</text>

<!-- taskbar -->
<rect x="0" y="1038" width="1923" height="17" fill="url(#tb)"/>
<rect x="0" y="1038" width="13" height="17" fill="#0f1316"/>
<rect x="851" y="1038" width="48" height="17" fill="#a86a30"/>
<rect x="1096" y="1038" width="48" height="17" fill="#4e5a60"/>
<path d="M33 1050l7-1.500V1055h-7zM41 1048l8-2v9h-8z" fill="#fff"/>
<circle cx="91" cy="1055" r="7.500" fill="none" stroke="#fff" stroke-width="1.800"/>
<rect x="132" y="1047" width="16" height="8" fill="#8b9aa3"/><rect x="134" y="1049" width="12" height="3" fill="#4fc3e8"/>
<circle cx="189" cy="1055" r="9" fill="none" stroke="#d93fb1" stroke-width="5"/><path d="M182 1050a9 9 0 0 1 8-4" stroke="#3fb3e8" stroke-width="4" fill="none"/>
<rect x="227" y="1047" width="22" height="8" fill="#f2a33a"/><circle cx="238" cy="1054" r="4" fill="none" stroke="#fff" stroke-width="1.500"/>
<circle cx="294" cy="1049" r="3" fill="#2d8fe0"/><circle cx="284" cy="1052" r="2" fill="#1d6fc0"/>
<rect x="324" y="1047" width="24" height="8" rx="2" fill="#fff"/><rect x="330" y="1050" width="12" height="5" fill="#1e88d8"/>
<rect x="373" y="1047" width="24" height="8" rx="2" fill="#1e88e5"/><circle cx="385" cy="1053" r="3" fill="#fff"/>
<circle cx="434" cy="1055" r="8" fill="#111"/><path d="M427 1052a8 8 0 0 1 14 0" fill="none" stroke="#4a9a3a" stroke-width="2"/>
<circle cx="483" cy="1056" r="10" fill="#fff"/><path d="M475 1052q8-6 16 0M478 1055q5-3 10 0" stroke="#1b5fb0" stroke-width="2" fill="none"/>
<rect x="525" y="1048" width="12" height="7" fill="#ddd"/><path d="M525 1051h12" stroke="#444"/>
<path d="M572 1048h11l5 5v2h-16z" fill="#f5f5f5"/>
<circle cx="630" cy="1056" r="10" fill="#1a1a1a" stroke="#9acb3c" stroke-width="2"/><path d="M624 1052l10 3" stroke="#ddd" stroke-width="2"/>
<rect x="668" y="1047" width="12" height="8" rx="2" fill="none" stroke="#2d9fe0" stroke-width="1.500"/>
<rect x="720" y="1047" width="17" height="8" fill="#b01010" stroke="#e33"/><rect x="727" y="1049" width="2" height="6" fill="#fff"/>
<rect x="769" y="1047" width="16" height="8" rx="4" fill="#fff"/><ellipse cx="777" cy="1053" rx="3" ry="3.500" fill="#111"/>
<circle cx="820" cy="1053" r="1" fill="#aa9"/><circle cx="826" cy="1050" r="1" fill="#cb6"/><circle cx="831" cy="1053" r="1" fill="#9ab"/>
<circle cx="873" cy="1055" r="7" fill="none" stroke="#3d9be9" stroke-width="2.500"/>
<circle cx="923" cy="1055" r="8" fill="none" stroke="#1e90ff" stroke-width="3"/>
<rect x="969" y="1047" width="14" height="8" fill="#1e8a4c"/><rect x="961" y="1051" width="11" height="4" fill="#0c6b35"/>
<rect x="1013" y="1047" width="18" height="8" fill="#3f9ae6"/><rect x="1010" y="1051" width="12" height="4" fill="#1a5fb4"/>
<path d="M1064 1055l3-8h9l3 8z" fill="#c7dde5"/>
<path d="M1110 1052h10v3h-10z" fill="#d17a1e"/><path d="M1120 1052l3-2 3-3 1 1-4 7h-3z" fill="#1a9a4a"/>
<text x="1881" y="1052" style="font-size:12px;fill:#fff">12:38</text>
</svg>
</body>
</html>
